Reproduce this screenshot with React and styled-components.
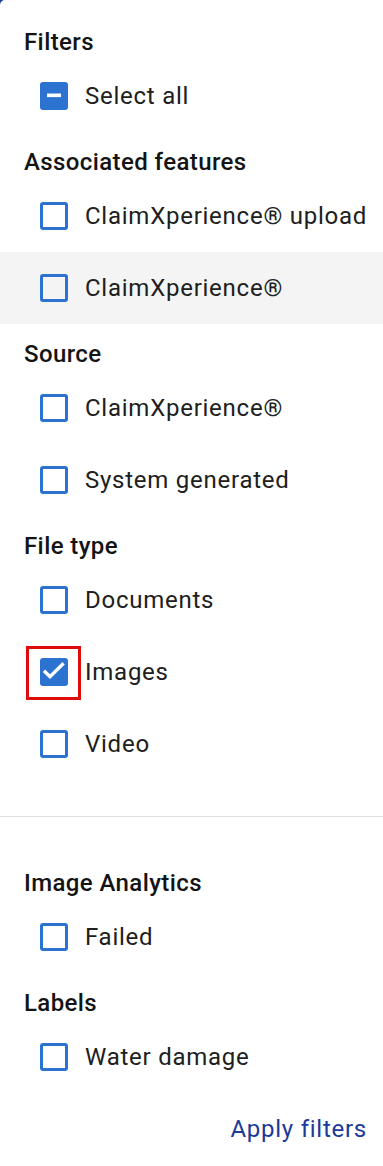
import React, { useState } from 'react';
import styled, { createGlobalStyle, css } from 'styled-components';

const GlobalStyle = createGlobalStyle`
  html, body {
    margin: 0;
    padding: 0;
    background: #1b3a9a;
  }
  body {
    font-family: Roboto, "Noto Sans", "Liberation Sans", sans-serif;
  }
`;

const Panel = styled.div`
  width: 383px;
  height: 1166px;
  box-sizing: border-box;
  background: #ffffff;
  border-top-left-radius: 5px;
  padding-top: 12px;
  display: flex;
  flex-direction: column;
  overflow: hidden;
`;

const Heading = styled.div`
  padding: 12px 24px 0;
  height: 36px;
  line-height: 36px;
  font-size: 24px;
  font-weight: 500;
  color: #141414;
  letter-spacing: 0.4px;
`;

const Row = styled.label`
  display: flex;
  align-items: center;
  height: 72px;
  padding-left: 40px;
  gap: 17px;
  cursor: pointer;

  ${props => props.$hover && css`
    background: #f4f4f4;
  `}
`;

const BoxWrap = styled.span`
  position: relative;
  display: flex;
`;

const Box = styled.span`
  width: 28px;
  height: 28px;
  box-sizing: border-box;
  border-radius: 3px;
  border: 3px solid #2b72d1;
  display: flex;
  align-items: center;
  justify-content: center;

  ${props => props.$filled && css`
    background: #2b72d1;
  `}
`;

const Highlight = styled.span`
  position: absolute;
  left: -14px;
  top: -12px;
  width: 55px;
  height: 54px;
  box-sizing: border-box;
  border: 3px solid #e00b0b;
`;

const Label = styled.span`
  font-size: 24px;
  color: #202020;
  letter-spacing: 0.75px;
`;

const Divider = styled.hr`
  margin: 36px 0 36px;
  border: 0;
  border-top: 1px solid #e0e0e0;
  height: 0;
`;

const Footer = styled.div`
  display: flex;
  justify-content: flex-end;
  align-items: center;
  height: 72px;
  padding-right: 16px;
`;

const ApplyButton = styled.button`
  background: none;
  border: 0;
  padding: 0;
  font-family: inherit;
  font-size: 24px;
  color: #1b3a9a;
  letter-spacing: 0.75px;
  cursor: pointer;
`;

const CheckIcon = () => (
  <svg width="22" height="22" viewBox="0 0 22 22" fill="none">
    <path d="M1 9.8 L7 15.6 L20.6 2.2" stroke="#fff" strokeWidth="3.4" />
  </svg>
);

const DashIcon = () => (
  <svg width="22" height="22" viewBox="0 0 22 22">
    <rect x="4" y="8.5" width="14" height="3.6" fill="#fff" />
  </svg>
);

const Checkbox = ({ state, marked }) => (
  <BoxWrap>
    <Box $filled={state !== 'off'}>
      {state === 'on' && <CheckIcon />}
      {state === 'mixed' && <DashIcon />}
    </Box>
    {marked && <Highlight />}
  </BoxWrap>
);

const sections = [
  { title: 'Associated features', items: ['ClaimXperience® upload', 'ClaimXperience®'] },
  { title: 'Source', items: ['ClaimXperience®', 'System generated'] },
  { title: 'File type', items: ['Documents', 'Images', 'Video'] },
];

const extra = [
  { title: 'Image Analytics', items: ['Failed'] },
  { title: 'Labels', items: ['Water damage'] },
];

const Section = ({ title, items, checked, hovered }) => (
  <>
    <Heading>{title}</Heading>
    {items.map(item => (
      <Row key={item} $hover={hovered === `${title}/${item}`}>
        <Checkbox
          state={checked[item] ? 'on' : 'off'}
          marked={title === 'File type' && item === 'Images'}
        />
        <Label>{item}</Label>
      </Row>
    ))}
  </>
);

export default function App() {
  const [checked] = useState({ Images: true });
  const hovered = 'Associated features/ClaimXperience®';

  return (
    <>
      <GlobalStyle />
      <Panel>
        <Heading>Filters</Heading>
        <Row>
          <Checkbox state="mixed" />
          <Label>Select all</Label>
        </Row>
        {sections.map(s => (
          <Section key={s.title} {...s} checked={checked} hovered={hovered} />
        ))}
        <Divider />
        {extra.map(s => (
          <Section key={s.title} {...s} checked={checked} hovered={hovered} />
        ))}
        <Footer>
          <ApplyButton>Apply filters</ApplyButton>
        </Footer>
      </Panel>
    </>
  );
}
